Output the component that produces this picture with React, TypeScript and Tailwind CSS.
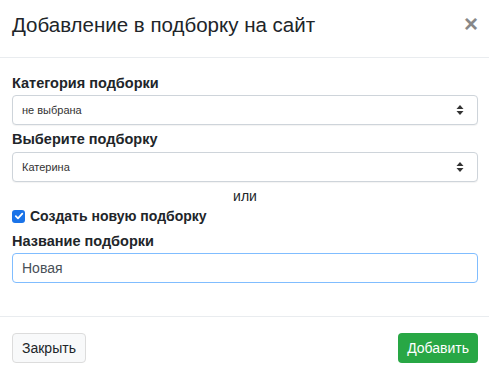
import React from 'react';

function SelectArrows() {
  return (
    <svg width="8" height="12" viewBox="0 0 8 12" className="shrink-0">
      <path d="M4 1 L7.5 5 H0.5 Z" fill="#333" />
      <path d="M4 11 L7.5 7 H0.5 Z" fill="#333" />
    </svg>
  );
}

function FakeSelect({ value }: { value: string }) {
  return (
    <div className="h-[30px] flex items-center justify-between rounded-[4px] border border-[#ced4da] bg-white pl-[9px] pr-[13px] shadow-[0_1px_1px_rgba(0,0,0,0.05)]">
      <span className="text-[11px] text-[#333]">{value}</span>
      <SelectArrows />
    </div>
  );
}

export default function App() {
  return (
    <div className="w-[489px] h-[370px] bg-white font-['Liberation_Sans',Arial,sans-serif] text-[#212529] overflow-hidden">
      <div className="h-[58px] border-b border-[#e9ecef] flex items-center justify-between pl-[12px] pr-[11px]">
        <h5 className="text-[20.5px] leading-[24px] text-[#212529] pb-[14px] pt-[6px]">Добавление в подборку на сайт</h5>
        <span className="text-[24px] font-bold leading-none text-[#888] pb-[14px] pt-[4px]">×</span>
      </div>
      <div className="pl-[12px] pr-[11px] pt-[15px] h-[259px] border-b border-[#e9ecef]">
        <div className="text-[14.5px] font-bold leading-[20px] mb-[2px]">Категория подборки</div>
        <FakeSelect value="не выбрана" />
        <div className="text-[14.5px] font-bold leading-[20px] mt-[4px] mb-[3px]">Выберите подборку</div>
        <FakeSelect value="Катерина" />
        <div className="text-center text-[14px] leading-[20px] mt-[4px]">или</div>
        <label className="flex items-center h-[20px] gap-[5px]">
          <span className="w-[13px] h-[13px] rounded-[3px] bg-[#1a73e8] flex items-center justify-center">
            <svg width="10" height="10" viewBox="0 0 10 10">
              <path d="M1.8 5.2 L4 7.4 L8.3 2.6" stroke="white" strokeWidth="1.8" fill="none" strokeLinecap="round" strokeLinejoin="round" />
            </svg>
          </span>
          <span className="text-[14px] font-bold">Создать новую подборку</span>
        </label>
        <div className="text-[14.5px] font-bold leading-[20px] mt-[5px] mb-[2px]">Название подборки</div>
        <div className="h-[30px] flex items-center rounded-[4px] border border-[#80bdff] bg-white px-[9px]">
          <span className="text-[14px] text-[#495057]">Новая</span>
        </div>
      </div>
      <div className="flex items-center justify-between pl-[12px] pr-[11px] pt-[16px]">
        <button className="h-[30px] px-[9px] rounded-[4px] border border-[#dcdcdc] bg-[#f8f9fa] text-[14px] text-[#212529]">Закрыть</button>
        <button className="h-[30px] px-[9px] rounded-[4px] bg-[#28a745] text-[14px] text-white">Добавить</button>
      </div>
    </div>
  );
}
